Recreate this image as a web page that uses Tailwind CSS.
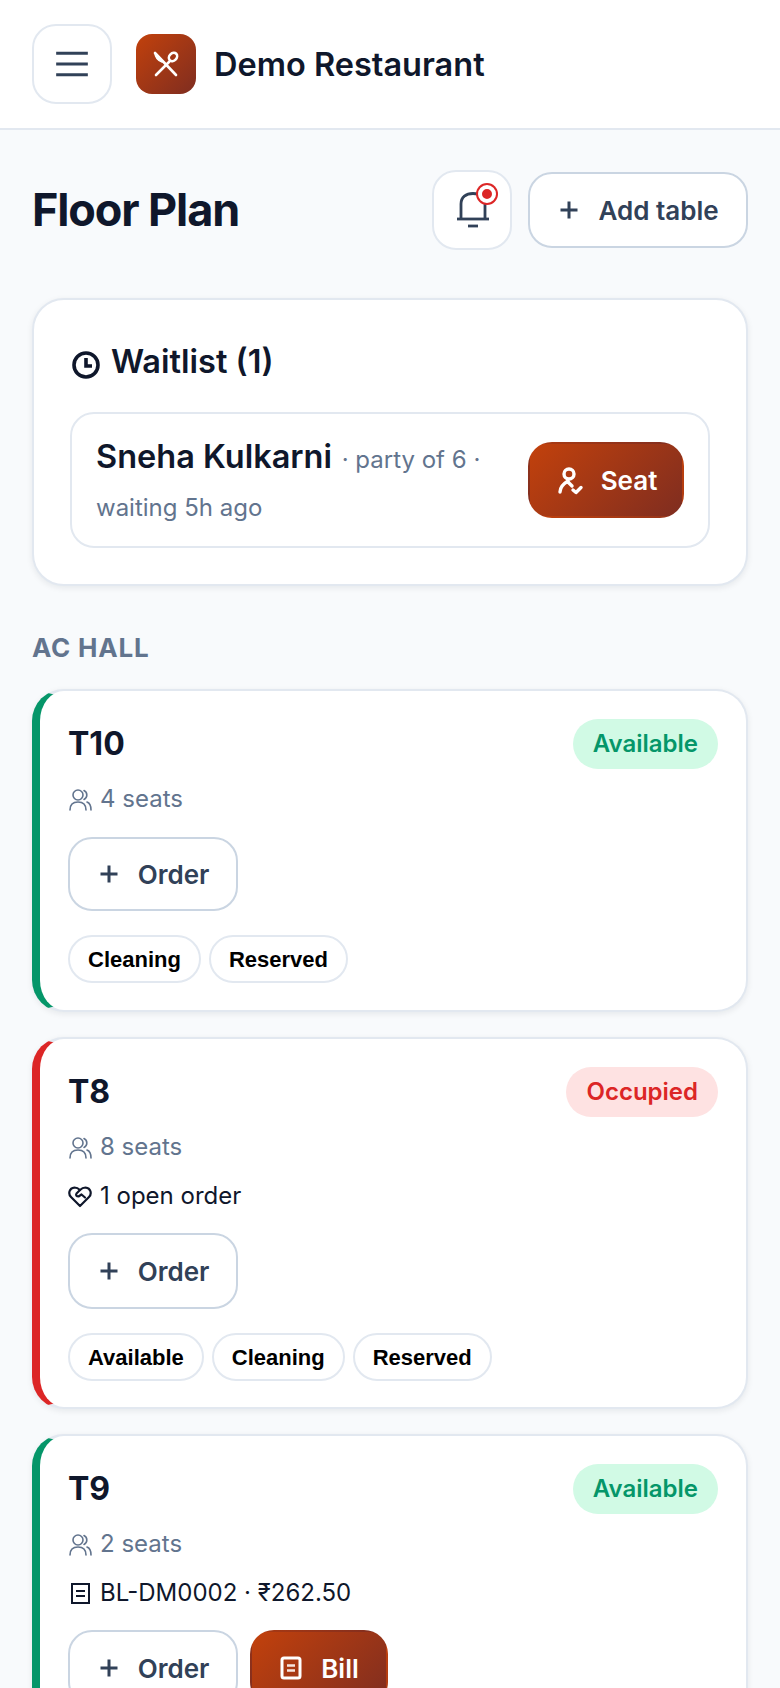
<!DOCTYPE html>
<html lang="en">
  <head>
    <meta charset="UTF-8" />
    <meta name="viewport" content="width=device-width, initial-scale=1.0" />
    <title>Floor Plan - Demo Restaurant</title>
    <script src="https://cdn.jsdelivr.net/npm/@tailwindcss/browser@4"></script>
  </head>
  <body class="bg-[#f8fafc] font-['Inter',sans-serif] text-slate-900">
    <div class="h-[1688px] overflow-hidden">
      <!-- top bar -->
      <header class="h-[130px] bg-white border-b-2 border-slate-200 px-8 flex items-center gap-6">
        <button class="w-20 h-20 rounded-3xl border-2 border-slate-200 bg-white flex items-center justify-center text-slate-700">
          <svg class="w-10 h-10" viewBox="0 0 24 24" fill="none" stroke="currentColor" stroke-width="1.8"><path d="M2.500 5.500h19M2.500 12h19M2.500 18.500h19" /></svg>
        </button>
        <div class="flex items-center gap-[18px]">
          <div class="w-[60px] h-[60px] rounded-2xl bg-[linear-gradient(135deg,#c2410c,#7f2d20)] flex items-center justify-center">
            <svg class="w-8 h-8" viewBox="0 0 32 32" fill="none" stroke="#fff" stroke-width="2.6" stroke-linecap="round"><path d="M5 5l21 22" /><path d="M5 5c0 4 3 8 7 9" fill="#fff" stroke-width="1.5" /><path d="M6 27l13-13" /><ellipse cx="23" cy="9" rx="3.6" ry="4.6" transform="rotate(45 23 9)" /></svg>
          </div>
          <span class="text-[32.5px] leading-9 font-semibold mt-0.5">Demo Restaurant</span>
        </div>
      </header>

      <main class="px-8">
        <!-- title row -->
        <div class="mt-10 flex items-center justify-between">
          <h1 class="text-[45px] leading-[52px] font-bold tracking-[-0.025em]">Floor Plan</h1>
          <div class="flex items-center gap-4">
            <button class="relative w-20 h-20 rounded-3xl border-2 border-slate-200 bg-white flex items-center justify-center text-slate-700">
              <svg class="w-10 h-10" viewBox="0 0 40 40" fill="none" stroke="currentColor" stroke-width="2.8"><path d="M9 29V14C9 7 14 3.500 21 3.500S33 7 33 14v15" /><path d="M5 29h32" /><path d="M16 36h10" /></svg>
              <span class="absolute left-[44px] top-[13px] w-[18px] h-[18px] rounded-full bg-[#dc2626] border-[4px] border-white ring-2 ring-[#dc2626]"></span>
            </button>
            <button class="h-[76px] w-[220px] rounded-3xl border-2 border-slate-300 bg-white flex items-center justify-center gap-[17px] text-slate-700 text-[26px] font-semibold">
              <svg class="w-6 h-6" viewBox="0 0 24 24" fill="none" stroke="currentColor" stroke-width="3"><path d="M12 3.500v17M3.500 12h17" /></svg>
              <span>Add table</span>
            </button>
          </div>
        </div>

        <!-- waitlist -->
        <section class="mt-12 h-[288px] rounded-[32px] border-2 border-slate-200 bg-white shadow-[0_2px_6px_rgba(15,23,42,0.08)] px-9 pt-[38px]">
          <h2 class="flex items-center gap-[9px] text-[32.5px] leading-[48px] font-semibold">
            <svg class="w-[32px] h-[32px] mt-1.5" viewBox="0 0 32 32" fill="none" stroke="currentColor" stroke-width="3.6"><circle cx="16" cy="16" r="12" /><path d="M16 9v8h6" /></svg>
            <span>Waitlist (1)</span>
          </h2>
          <div class="mt-[26px] h-[136px] rounded-3xl border-2 border-slate-200 flex items-center justify-between pl-6 pr-6">
            <p class="w-[400px] pt-1 text-[24px] leading-[48px] text-slate-500">
              <span class="text-[32.5px] font-semibold text-slate-900">Sneha Kulkarni</span>
              <span class="ml-[3px]">· party of 6 ·</span> waiting 5h ago
            </p>
            <button class="h-[76px] w-[156px] rounded-3xl border-2 border-transparent bg-[linear-gradient(135deg,#c2410c,#7f2d20)] text-white text-[26px] font-semibold flex items-center justify-center gap-[14px]">
              <svg class="w-[32px] h-[32px]" viewBox="0 0 32 32" fill="none" stroke="currentColor" stroke-width="3.4" stroke-linecap="round" stroke-linejoin="round"><circle cx="14" cy="10" r="5" /><path d="M5 28c0-5 3-8 8-11" /><path d="M13 18l4 4" /><path d="M18 26l3 2.500 5-5" /></svg>
              <span>Seat</span>
            </button>
          </div>
        </section>

        <h3 class="mt-[46px] text-[26px] leading-[32px] font-bold tracking-[0.03em] text-slate-500">AC HALL</h3>

        <!-- T10 -->
        <article class="mt-[25px] h-[323px] rounded-[32px] border-2 border-l-8 border-slate-200 border-l-[#059669] bg-white shadow-[0_2px_6px_rgba(15,23,42,0.08)] pl-7 pr-7 pt-7">
          <div class="flex items-center justify-between">
            <h4 class="text-[32px] leading-[50px] font-bold">T10</h4>
            <span class="h-[50px] px-5 rounded-full bg-[#d1fae5] text-[#059669] text-[24px] font-semibold flex items-center">Available</span>
          </div>
          <p class="mt-3 flex items-center gap-2 text-[24px] leading-9 text-slate-500">
            <svg class="w-6 h-6" viewBox="0 0 24 24" fill="none" stroke="currentColor" stroke-width="1.6" stroke-linecap="round"><circle cx="10" cy="8" r="5" /><path d="M2 23c0-5 3-8 8-8s8 3 8 8" /><path d="M16 3.500a5 5 0 0 1 0 9" /><path d="M19 15c3 1 4 4 4 8" /></svg>
            <span>4 seats</span>
          </p>
          <div class="mt-[20px] flex gap-3">
            <button class="h-[74px] w-[170px] rounded-3xl border-2 border-slate-300 bg-white flex items-center justify-center gap-[17px] text-slate-700 text-[26px] font-semibold">
              <svg class="w-6 h-6" viewBox="0 0 24 24" fill="none" stroke="currentColor" stroke-width="3"><path d="M12 3.500v17M3.500 12h17" /></svg>
              <span>Order</span>
            </button>
          </div>
          <div class="mt-6 flex gap-[8px]">
            <button class="h-12 px-[18px] rounded-full border-2 border-slate-200 bg-white font-['Liberation_Sans',sans-serif] text-[22px] font-bold text-black">Cleaning</button>
            <button class="h-12 px-[18px] rounded-full border-2 border-slate-200 bg-white font-['Liberation_Sans',sans-serif] text-[22px] font-bold text-black">Reserved</button>
          </div>
        </article>

        <!-- T8 -->
        <article class="mt-[25px] h-[372px] rounded-[32px] border-2 border-l-8 border-slate-200 border-l-[#dc2626] bg-white shadow-[0_2px_6px_rgba(15,23,42,0.08)] pl-7 pr-7 pt-7">
          <div class="flex items-center justify-between">
            <h4 class="text-[32px] leading-[50px] font-bold">T8</h4>
            <span class="h-[50px] px-5 rounded-full bg-[#fee2e2] text-[#dc2626] text-[24px] font-semibold flex items-center">Occupied</span>
          </div>
          <p class="mt-3 flex items-center gap-2 text-[24px] leading-9 text-slate-500">
            <svg class="w-6 h-6" viewBox="0 0 24 24" fill="none" stroke="currentColor" stroke-width="1.6" stroke-linecap="round"><circle cx="10" cy="8" r="5" /><path d="M2 23c0-5 3-8 8-8s8 3 8 8" /><path d="M16 3.500a5 5 0 0 1 0 9" /><path d="M19 15c3 1 4 4 4 8" /></svg>
            <span>8 seats</span>
          </p>
          <p class="mt-[13px] flex items-center gap-2 text-[24px] leading-9 text-slate-900">
            <svg class="w-6 h-6" viewBox="0 0 24 24" fill="none" stroke="currentColor" stroke-width="2.2" stroke-linejoin="round" stroke-linecap="round"><path d="M12 22l-9-9c-3-3-2-9 3.500-9.500 2.500 0 4 1 5.500 2.500 1.500-1.500 3-2.500 5.500-2.500 5.500.5 6.500 6.500 3.500 9.500z" /><path d="M12 6L8.500 9.500c-1 1.500 0 3 2 3l3-2 3.500 3" /></svg>
            <span>1 open order</span>
          </p>
          <div class="mt-[19px] flex gap-3">
            <button class="h-[76px] w-[170px] rounded-3xl border-2 border-slate-300 bg-white flex items-center justify-center gap-[17px] text-slate-700 text-[26px] font-semibold">
              <svg class="w-6 h-6" viewBox="0 0 24 24" fill="none" stroke="currentColor" stroke-width="3"><path d="M12 3.500v17M3.500 12h17" /></svg>
              <span>Order</span>
            </button>
          </div>
          <div class="mt-6 flex gap-[8px]">
            <button class="h-12 px-[18px] rounded-full border-2 border-slate-200 bg-white font-['Liberation_Sans',sans-serif] text-[22px] font-bold text-black">Available</button>
            <button class="h-12 px-[18px] rounded-full border-2 border-slate-200 bg-white font-['Liberation_Sans',sans-serif] text-[22px] font-bold text-black">Cleaning</button>
            <button class="h-12 px-[18px] rounded-full border-2 border-slate-200 bg-white font-['Liberation_Sans',sans-serif] text-[22px] font-bold text-black">Reserved</button>
          </div>
        </article>

        <!-- T9 -->
        <article class="mt-[25px] h-[372px] rounded-[32px] border-2 border-l-8 border-slate-200 border-l-[#059669] bg-white shadow-[0_2px_6px_rgba(15,23,42,0.08)] pl-7 pr-7 pt-7">
          <div class="flex items-center justify-between">
            <h4 class="text-[32px] leading-[50px] font-bold">T9</h4>
            <span class="h-[50px] px-5 rounded-full bg-[#d1fae5] text-[#059669] text-[24px] font-semibold flex items-center">Available</span>
          </div>
          <p class="mt-3 flex items-center gap-2 text-[24px] leading-9 text-slate-500">
            <svg class="w-6 h-6" viewBox="0 0 24 24" fill="none" stroke="currentColor" stroke-width="1.6" stroke-linecap="round"><circle cx="10" cy="8" r="5" /><path d="M2 23c0-5 3-8 8-8s8 3 8 8" /><path d="M16 3.500a5 5 0 0 1 0 9" /><path d="M19 15c3 1 4 4 4 8" /></svg>
            <span>2 seats</span>
          </p>
          <p class="mt-[13px] flex items-center gap-2 text-[24px] leading-9 text-slate-900">
            <svg class="w-6 h-6" viewBox="0 0 24 24" fill="none" stroke="currentColor" stroke-width="2"><rect x="4" y="3" width="17" height="19" /><path d="M8 10h9M8 15h9" /></svg>
            <span>BL-DM0002 · ₹262.50</span>
          </p>
          <div class="mt-[19px] flex gap-3">
            <button class="h-[76px] w-[170px] rounded-3xl border-2 border-slate-300 bg-white flex items-center justify-center gap-[17px] text-slate-700 text-[26px] font-semibold">
              <svg class="w-6 h-6" viewBox="0 0 24 24" fill="none" stroke="currentColor" stroke-width="3"><path d="M12 3.500v17M3.500 12h17" /></svg>
              <span>Order</span>
            </button>
            <button class="h-[76px] w-[138px] rounded-3xl border-2 border-transparent bg-[linear-gradient(135deg,#c2410c,#7f2d20)] flex items-center justify-center gap-[18px] text-white text-[26px] font-semibold">
              <svg class="w-6 h-6" viewBox="0 0 24 24" fill="none" stroke="#fff" stroke-width="3"><rect x="3" y="2" width="18" height="20" rx="2" /><path d="M8 9.500h8M8 14.500h8" stroke-width="2.500" stroke="#f7e6df" /></svg>
              <span>Bill</span>
            </button>
          </div>
        </article>
      </main>
    </div>
  </body>
</html>
